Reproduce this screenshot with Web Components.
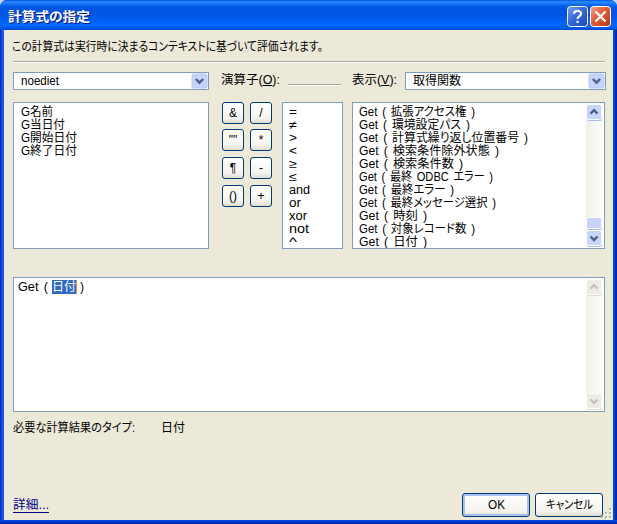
<!DOCTYPE html>
<html lang="ja"><head><meta charset="utf-8"><title>計算式の指定</title>
<style>
*{box-sizing:border-box}
body{margin:0;width:617px;height:524px;overflow:hidden;background:#c9d3e6;font:12px/13px "Liberation Sans","Noto Sans CJK JP",sans-serif;color:#000}
u{text-decoration:underline;text-underline-offset:1px}
.intro{display:flex;height:31px;align-items:flex-end;padding:0 0 7px 8px}
.rule{height:2px;margin:0 8px 0 9px;border-top:1px solid #aca899;border-bottom:1px solid #fff}
.heads{display:grid;grid-template-columns:196px 12px 59px 8px 53px 11px 45px 8px 201px;height:18px;margin:9px 0 0 9px}
.lab{display:flex;align-items:center;padding-bottom:1px}
.line{border-bottom:1px solid #aca899;margin-bottom:5px;box-shadow:0 1px #fff}
.lists{display:grid;grid-template-columns:196px 73px 61px 9px 253px;height:147px;margin:12px 0 0 9px}
.lists>:nth-child(2){margin-left:13px}
.ops{display:grid;grid-template-columns:22px 22px;column-gap:6px;grid-template-rows:27px 28px 28px 22px;align-content:start}
.edit{margin:28px 8px 0 9px;height:135px}
.row{display:flex}
.sel{background:#316ac5;color:#fff;height:14px;width:24px;margin-left:4px;margin-right:4px;box-shadow:1px 0 #f0941e}
.result{display:flex;margin:10px 0 0 9px;gap:26px;height:14px}
.foot{display:flex;margin-top:57px;padding-left:9px;height:28px}
.link{color:#00008b;width:36px;height:14px;margin:6px 413px 0 0;border-bottom:1px solid #00008b;line-height:12px}
</style></head><body>
<xp-window>
<xp-fit slot="title" w="82">計算式の指定</xp-fit>
<div class="intro"><xp-fit w="311">この計算式は実行時に決まるコンテキストに基づいて評価されます。</xp-fit></div>
<div class="rule"></div>
<div class="heads">
<xp-combo><xp-fit w="38">noediet</xp-fit></xp-combo><i></i>
<div class="lab"><xp-fit w="59">演算子(<u>O</u>):</xp-fit></div><i></i><div class="line"></div><i></i>
<div class="lab"><xp-fit w="45">表示(<u>V</u>):</xp-fit></div><i></i>
<xp-combo><xp-fit w="48">取得関数</xp-fit></xp-combo>
</div>
<div class="lists">
<xp-list><xp-fit w="32">G名前</xp-fit><xp-fit w="44">G当日付</xp-fit><xp-fit w="56">G開始日付</xp-fit><xp-fit w="56">G終了日付</xp-fit></xp-list>
<div class="ops"><xp-op>&amp;</xp-op><xp-op>/</xp-op><xp-op>""</xp-op><xp-op>*</xp-op><xp-op>¶</xp-op><xp-op>-</xp-op><xp-op>()</xp-op><xp-op>+</xp-op></div>
<xp-list style="--pl:6px"><xp-fit w="8">=</xp-fit><xp-fit w="8">≠</xp-fit><xp-fit w="8">&gt;</xp-fit><xp-fit w="8">&lt;</xp-fit><xp-fit w="8">≥</xp-fit><xp-fit w="8">≤</xp-fit><xp-fit w="21">and</xp-fit><xp-fit w="12">or</xp-fit><xp-fit w="18">xor</xp-fit><xp-fit w="20">not</xp-fit><xp-fit w="8">^</xp-fit></xp-list>
<i></i>
<xp-list style="--pl:6px">
<xp-fit w="116">Get ( 拡張アクセス権 )</xp-fit><xp-fit w="111">Get ( 環境設定パス )</xp-fit><xp-fit w="169">Get ( 計算式繰り返し位置番号 )</xp-fit><xp-fit w="140">Get ( 検索条件除外状態 )</xp-fit><xp-fit w="104">Get ( 検索条件数 )</xp-fit><xp-fit w="134">Get ( 最終 ODBC エラー )</xp-fit><xp-fit w="95">Get ( 最終エラー )</xp-fit><xp-fit w="137">Get ( 最終メッセージ選択 )</xp-fit><xp-fit w="68">Get ( 時刻 )</xp-fit><xp-fit w="116">Get ( 対象レコード数 )</xp-fit><xp-fit w="68">Get ( 日付 )</xp-fit>
<xp-scroll slot="bar" thumb></xp-scroll></xp-list>
</div>
<xp-list class="edit" style="--pl:4px;--pt:2px"><div class="row"><xp-fit w="30" style="padding-top:1px">Get (</xp-fit><div class="sel"><xp-fit w="24" style="padding-top:1px">日付</xp-fit></div><xp-fit w="4" style="padding-top:1px">)</xp-fit></div><xp-scroll slot="bar" disabled></xp-scroll></xp-list>
<div class="result"><xp-fit w="122">必要な計算結果のタイプ:</xp-fit><xp-fit w="24">日付</xp-fit></div>
<div class="foot"><div class="link"><xp-fit w="36">詳細...</xp-fit></div><xp-button default><xp-fit w="17">OK</xp-fit></xp-button><xp-button><xp-fit w="47">キャンセル</xp-fit></xp-button></div>
</xp-window>
<script>
function define(name, html, init) {
  const t = document.createElement('template');
  t.innerHTML = '<style>*{box-sizing:border-box}</style>' + html;
  customElements.define(name, class extends HTMLElement {
    connectedCallback() {
      if (this.shadowRoot) return;
      this.attachShadow({mode: 'open'}).append(t.content.cloneNode(true));
      if (init) init(this, this.shadowRoot);
    }
  });
}
define('xp-window', `<style>
:host{display:grid;grid-template-rows:30px 490px 4px;width:617px;height:524px;border-radius:7px 7px 0 0;overflow:hidden;background:#0831d9}
.bar{display:flex;align-items:center;padding:3px 6px 0 8px;gap:2px;background:linear-gradient(#0058e0,#2f8aff 2px,#1673f5 4px,#0560e6 6px,#0054e3 9px,#0056e6 15px,#0262f5 21px,#0269ff 25px,#005ae8 28px,#0046c9 30px)}
.title{flex:1;color:#fff;font-weight:bold;font-size:13px;text-shadow:1px 1px #0a1883}
.body{margin:0;border:solid;border-width:0 4px;border-image:linear-gradient(90deg,#0019cf,#0831d9 1px,#166aee 3px,#0855dd 4px,#0855dd calc(100% - 4px),#0044e4 calc(100% - 3px),#001ea0) 4;background:#ece9d8;overflow:hidden;position:relative}
.bottom{background:linear-gradient(#0855dd,#0040d8 1px,#001d9e)}
svg{display:block}
.grip{position:absolute;right:1px;bottom:1px}
</style>
<div class="bar"><div class="title"><slot name="title"></slot></div>
<svg width="21" height="21"><defs><linearGradient id="b" x2="1" y2="1"><stop stop-color="#7ba4f4"/><stop offset=".45" stop-color="#3569df"/><stop offset="1" stop-color="#1b48bd"/></linearGradient></defs><rect x=".5" y=".5" width="20" height="20" rx="3" fill="url(#b)" stroke="#fff"/><path d="M7 7.8C7 4 14.1 4 14.1 7.6C14.1 10 10.6 10.2 10.6 13M10.6 14.8V17" fill="none" stroke="#fff" stroke-width="2.2"/></svg>
<svg width="21" height="21"><defs><linearGradient id="r" x2="1" y2="1"><stop stop-color="#f1a18b"/><stop offset=".45" stop-color="#e35b37"/><stop offset="1" stop-color="#c1340f"/></linearGradient></defs><rect x=".5" y=".5" width="20" height="20" rx="3" fill="url(#r)" stroke="#fff"/><path d="M5.5 5.5L15.5 15.5M15.5 5.5L5.5 15.5" stroke="#fff" stroke-width="2.3"/></svg></div>
<div class="body"><slot></slot><svg class="grip" width="11" height="11"><g fill="#fff"><path d="M9 1h2v2h-2zM5 5h2v2h-2zM9 5h2v2h-2zM1 9h2v2h-2zM5 9h2v2h-2zM9 9h2v2h-2z"/></g><g fill="#b8b4a2"><path d="M8 0h2v2h-2zM4 4h2v2h-2zM8 4h2v2h-2zM0 8h2v2h-2zM4 8h2v2h-2zM8 8h2v2h-2z"/></g></svg></div><div class="bottom"></div>`);
define('xp-combo', `<style>:host{display:flex;align-items:center;height:18px;background:#fff;border:1px solid #7f9db9;padding-left:7px}.t{flex:1}svg{display:block}</style>
<div class="t"><slot></slot></div><svg width="17" height="16"><rect x="1" y="1" width="15" height="14" rx="1.5" fill="#c4d4fc" stroke="#b5c7f3"/><path d="M4.8 6L8.5 9.7L12.2 6" fill="none" stroke="#4d6185" stroke-width="2.4"/></svg>`);
define('xp-list', `<style>:host{display:flex;background:#fff;border:1px solid #7f9db9;overflow:hidden}.t{flex:1;padding:var(--pt,3px) 0 0 var(--pl,7px);display:flex;flex-direction:column;align-items:flex-start}</style><div class="t"><slot></slot></div><slot name="bar"></slot>`);
define('xp-scroll', `<style>:host{display:flex;flex-direction:column;width:17px;margin:1px 1px 1px 0;background:linear-gradient(90deg,#f0efe9,#fdfdfa);--f:#c5d5fc;--s:#4d6185;--e:#a9bdec}
:host([disabled]){--f:#edebe3;--s:#c5c3b8;--e:#dddbd0}svg{display:block}rect{fill:var(--f);stroke:#fff}.o{fill:var(--e);stroke:none}path{fill:none;stroke:var(--s);stroke-width:2.4}.g{flex:1}.m{display:none}:host([thumb]) .m{display:block}</style>
<svg width="17" height="17"><rect class="o" x="1" y="1" width="15" height="16" rx="2"/><rect x=".5" y=".5" width="15" height="15" rx="2"/><path d="M4.5 9.7L8 6.2L11.5 9.7"/></svg><div class="g"></div>
<svg class="m" width="17" height="13"><rect class="o" x="1" y="1" width="15" height="12" rx="2"/><rect x=".5" y=".5" width="15" height="11" rx="2"/></svg>
<svg width="17" height="17"><rect class="o" x="1" y="1" width="15" height="16" rx="2"/><rect x=".5" y=".5" width="15" height="15" rx="2"/><path d="M4.5 6.5L8 10L11.5 6.5"/></svg>`);
define('xp-op', `<style>:host{display:flex;align-items:center;justify-content:center;width:22px;height:22px;border:1px solid #003c74;border-radius:3px;background:linear-gradient(#fff,#f4f3ee 75%,#dfdccf);font-size:12px}</style><slot></slot>`);
define('xp-button', `<style>:host{display:flex;align-items:center;justify-content:center;width:68px;height:24px;margin-right:5px;border:1px solid #003c74;border-radius:3px;background:linear-gradient(#fff,#f3f2ec 80%,#dcd8cb)}:host([default]){box-shadow:inset 0 0 0 2px #a6c3f3}</style><slot></slot>`);
// Text scaled horizontally so its advance equals the w attribute.
define('xp-fit', `<style>:host{display:block;height:13px;white-space:nowrap;flex:none}span{display:inline-block;height:13px;line-height:13px;word-spacing:1.7px;font-feature-settings:"palt";transform-origin:0 0}</style><span><slot></slot></span>`, (el, root) => {
  const s = root.querySelector('span'), w = +el.getAttribute('w');
  el.style.width = w + 'px';
  s.style.transform = 'scaleX(' + w / s.getBoundingClientRect().width + ')';
});
</script></body></html>
